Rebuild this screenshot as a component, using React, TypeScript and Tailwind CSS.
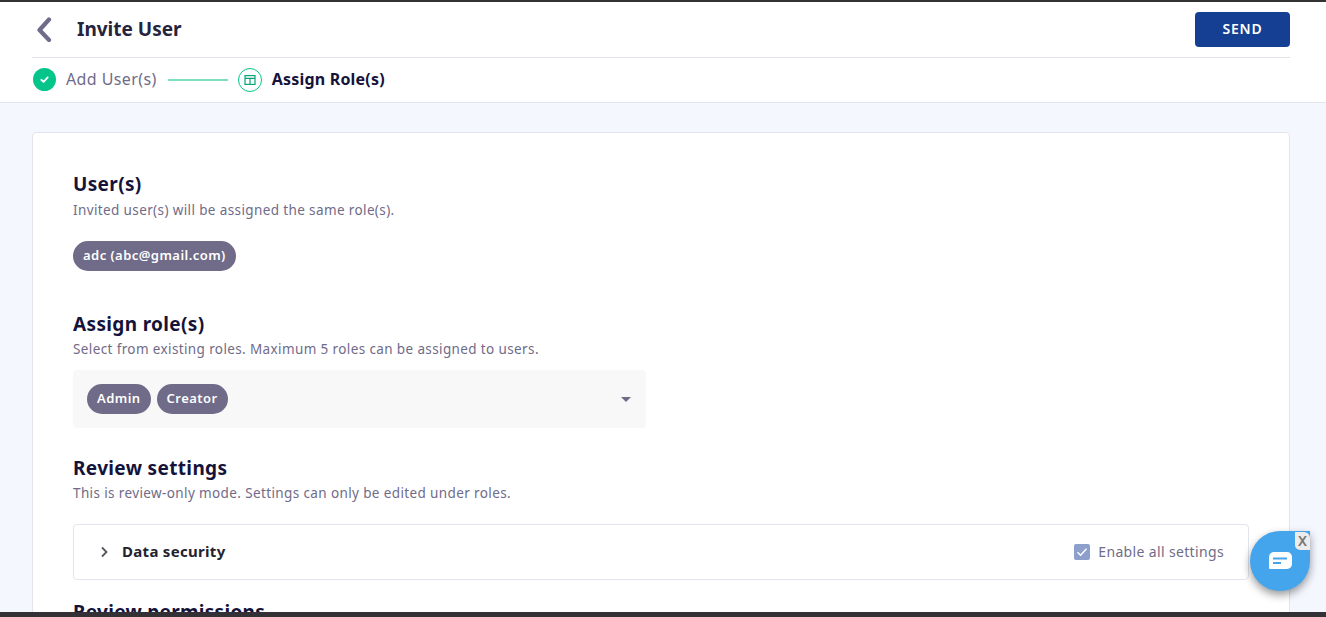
import React from "react";

const Chip = ({ children }: { children: React.ReactNode }) => (
  <span className="inline-flex h-[30px] items-center rounded-[15px] bg-[#6f6b88] px-[10px] text-[13px] font-semibold tracking-[0.45px] text-white">{children}</span>
);

const Heading = ({ title, sub, first }: { title: string; sub: string; first?: boolean }) => (
  <>
    <h2 className="text-[19px] font-bold leading-[26px] tracking-[0.35px] text-[#15133a]">{title}</h2>
    <p className={first ? "mt-[4px] text-[13.5px] leading-[18px] tracking-[0.38px] text-[#6f6b88]" : "mt-[3px] text-[13.5px] leading-[18px] tracking-[0.38px] text-[#6f6b88]"}>{sub}</p>
  </>
);

export default function App() {
  return (
    <div className="relative flex h-[617px] w-[1326px] flex-col overflow-hidden bg-[#f4f7fe] font-['Noto_Sans','Lato',sans-serif]">
      <div className="h-[2px] shrink-0 bg-[#333333]" />
      <header className="h-[101px] shrink-0 border-b border-[#e3e5ee] bg-white px-[32px]">
        <div className="mr-[4px] flex h-[56px] items-center justify-between border-b border-[#e2e1ea]">
          <div className="flex items-center">
            <svg width="24" height="26" viewBox="0 0 24 26" className="ml-[1px] mt-[-2px]" fill="none">
              <path d="M16 3.5 6.5 14 16 24" stroke="#6f6b88" strokeWidth="4.2" strokeLinecap="round" strokeLinejoin="round" />
            </svg>
            <h1 className="ml-[20px] text-[19px] font-bold text-[#26243d]">Invite User</h1>
          </div>
          <button className="h-[35px] w-[95px] rounded-[4px] bg-[#143f93] pb-[2px] text-[14px] font-semibold tracking-[0.8px] text-white">SEND</button>
        </div>
        <div className="flex h-[44px] items-center">
          <span className="ml-[1px] mt-[-1px] flex h-[23px] w-[23px] items-center justify-center rounded-full bg-[#06c58a]">
            <svg width="11" height="11" viewBox="0 0 12 12" fill="none">
              <path d="M2.5 6.3 5 8.6 9.5 3.8" stroke="#fff" strokeWidth="2" strokeLinecap="round" strokeLinejoin="round" />
            </svg>
          </span>
          <span className="ml-[10px] mt-[-2px] text-[16px] tracking-[0.4px] text-[#6f6b88]">Add User(s)</span>
          <span className="ml-[11px] h-[2px] w-[60px] bg-[#7fe0c1]" />
          <span className="ml-[10px] flex h-[24px] w-[24px] items-center justify-center rounded-full border border-[#06c58a]">
            <svg width="12" height="12" viewBox="0 0 12 12" fill="none" stroke="#06a577" strokeWidth="1.2">
              <rect x="1" y="1.6" width="10" height="8.8" />
              <path d="M1 4.4h10M6 4.4v6" />
            </svg>
          </span>
          <span className="ml-[10px] mt-[-2px] text-[16px] font-bold tracking-[0.2px] text-[#15133a]">Assign Role(s)</span>
        </div>
      </header>
      <main className="flex-1 px-[32px] pt-[29px]">
        <section className="h-[600px] w-[1258px] rounded-[4px] border border-[#e3e5ee] bg-white px-[40px] pt-[38px]">
          <Heading first title="User(s)" sub="Invited user(s) will be assigned the same role(s)." />
          <div className="mt-[22px]"><Chip>adc (abc@gmail.com)</Chip></div>
          <div className="mt-[40px]">
            <Heading title="Assign role(s)" sub="Select from existing roles. Maximum 5 roles can be assigned to users." />
          </div>
          <div className="mt-[12px] flex h-[58px] w-[573px] items-center gap-[6px] rounded-[4px] bg-[#f8f8f8] pl-[14px] pr-[15px]">
            <Chip>Admin</Chip>
            <Chip>Creator</Chip>
            <span className="ml-auto h-0 w-0 border-x-[5px] border-t-[5px] border-x-transparent border-t-[#6f6b88]" />
          </div>
          <div className="mt-[27px]">
            <Heading title="Review settings" sub="This is review-only mode. Settings can only be edited under roles." />
          </div>
          <div className="mt-[22px] flex h-[56px] w-[1176px] items-center rounded-[4px] border border-[#e3e5ee] pl-[25px] pr-[24px]">
            <svg width="12" height="12" viewBox="0 0 12 12" fill="none" className="ml-[-1px]">
              <path d="M4 1.5 8.5 6 4 10.5" stroke="#55555f" strokeWidth="1.8" />
            </svg>
            <span className="ml-[12px] mt-[-2px] text-[15px] font-bold tracking-[0.3px] text-[#24222f]">Data security</span>
            <span className="ml-auto flex h-[16px] w-[16px] items-center justify-center rounded-[2px] bg-[#8d9fcb]">
              <svg width="12" height="12" viewBox="0 0 12 12" fill="none">
                <path d="M1.5 6.3 4.6 9.3 10.5 2.8" stroke="#fff" strokeWidth="1.4" />
              </svg>
            </span>
            <span className="ml-[8px] mt-[-2px] text-[14px] tracking-[0.35px] text-[#6f6b88]">Enable all settings</span>
          </div>
          <h2 className="mt-[19px] text-[19px] font-bold leading-[26px] tracking-[0.3px] text-[#15133a]">Review permissions</h2>
        </section>
      </main>
      <div className="absolute inset-x-0 bottom-0 h-[5px] bg-[#333036]" />
      <div className="absolute left-[1250px] top-[531px] flex h-[60px] w-[60px] items-center justify-center rounded-full rounded-tr-[10px] bg-[#45a5ec] shadow-[0_4px_8px_rgba(0,0,0,0.4)]">
        <svg width="24" height="18" viewBox="0 0 24 18">
          <path d="M6 0h13a5 5 0 0 1 5 5v7a5 5 0 0 1-5 5H2a1 1 0 0 1-1-1V5a5 5 0 0 1 5-5z" fill="#fff" />
          <path d="M5 6.5h14M5 11h8" stroke="#45a5ec" strokeWidth="2" />
        </svg>
        <span className="absolute right-0 top-[1px] flex h-[18px] w-[15px] items-center justify-center rounded-bl-[5px] rounded-tr-[6px] bg-[#ececec] text-[14px] font-semibold leading-none text-[#777777]">X</span>
      </div>
    </div>
  );
}
